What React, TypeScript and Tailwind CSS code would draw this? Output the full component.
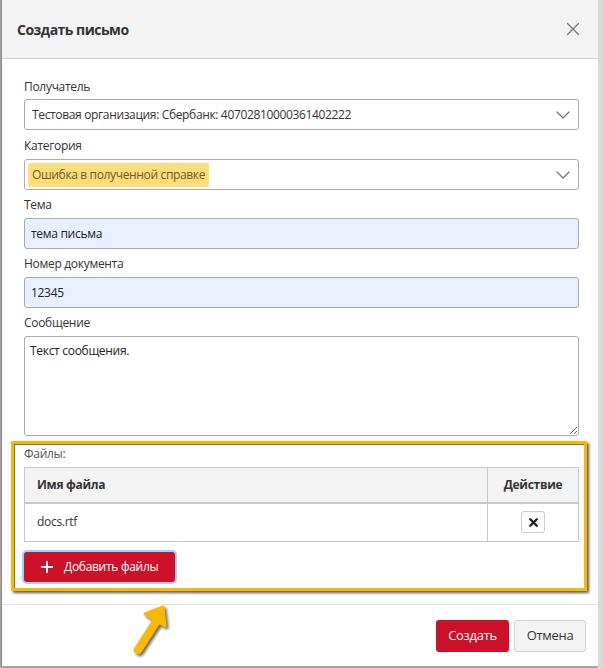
import { X, ChevronDown, Plus } from "lucide-react";

const font = { fontFamily: '"Open Sans", "Noto Sans", sans-serif' };

function Label({ children }: { children: React.ReactNode }) {
  return <div className="h-[19px] text-[12px] leading-[19px] tracking-[-0.3px] text-[#333]">{children}</div>;
}

function SelectBox({ children }: { children: React.ReactNode }) {
  return (
    <div className="flex h-[31px] items-center justify-between rounded-[3px] border border-[#aaa] bg-white pl-[3px] pr-[3px] text-[12px] tracking-[-0.35px] text-[#333]">
      {children}
      <ChevronDown className="h-[24px] w-[24px] text-[#777]" strokeWidth={1.3} />
    </div>
  );
}

function TextInput({ value }: { value: string }) {
  return (
    <div className="flex h-[31px] items-center rounded-[3px] border border-[#aaa] bg-[#e8f0fe] px-[6px] text-[12px] tracking-[-0.3px] text-[#222]">
      {value}
    </div>
  );
}

function Arrow() {
  return (
    <svg
      className="pointer-events-none absolute left-[125px] top-[599px]"
      width="56"
      height="62"
      viewBox="0 0 56 62"
      style={{ filter: "drop-shadow(2px 2px 1.5px rgba(0,0,0,0.6))" }}
    >
      <path d="M13 51 L31 23" stroke="#fbb800" strokeWidth="8.5" strokeLinecap="round" fill="none" />
      <path d="M20 15 L38 8 L40 27 Z" fill="#fbb800" stroke="#fbb800" strokeWidth="3" strokeLinejoin="round" />
    </svg>
  );
}

export default function App() {
  return (
    <div className="relative h-[668px] w-[603px] overflow-hidden bg-[#a3a3a3]" style={font}>
      <div className="absolute right-0 top-0 h-full w-[5px] bg-[#d9d9d9]" />
      <div className="relative ml-[1px] flex h-[666px] w-[597px] flex-col border-l border-[#888] bg-white">
        <div className="flex h-[59px] items-center justify-between border-b border-[#cfcfcf] bg-[#f3f3f3] pl-[15px] pr-[14px]">
          <div className="text-[14px] font-bold tracking-[-0.5px] text-[#333]">Создать письмо</div>
          <X className="h-[22px] w-[22px] text-[#777]" strokeWidth={1.3} />
        </div>

        <div className="flex flex-col pl-[22px] pr-[19px] pt-[18px]">
          <Label>Получатель</Label>
          <div className="mt-[3px]">
            <SelectBox>
              <span className="pl-[4px]">Тестовая организация: Сбербанк: 40702810000361402222</span>
            </SelectBox>
          </div>

          <div className="mt-[6px]">
            <Label>Категория</Label>
          </div>
          <div className="mt-[4px]">
            <SelectBox>
              <span className="rounded-[2px] bg-[#ffdd7a] px-[4px] py-[3px] text-[#6b5a2a]">
                Ошибка в полученной справке
              </span>
            </SelectBox>
          </div>

          <div className="mt-[5px]">
            <Label>Тема</Label>
          </div>
          <div className="mt-[4px]">
            <TextInput value="тема письма" />
          </div>

          <div className="mt-[5px]">
            <Label>Номер документа</Label>
          </div>
          <div className="mt-[4px]">
            <TextInput value="12345" />
          </div>

          <div className="mt-[5px]">
            <Label>Сообщение</Label>
          </div>
          <textarea
            readOnly
            defaultValue="Текст сообщения."
            className="mt-[4px] h-[100px] resize-y rounded-[3px] border border-[#aaa] px-[5px] py-[5px] text-[12px] tracking-[-0.3px] text-[#222] outline-none"
            style={font}
          />
        </div>

        <div className="ml-[9px] mr-[11px] mt-[5px] h-[150px] rounded-[1px] border-[3px] border-[#fbb800] pl-[10px] pr-[5px] shadow-[2px_2px_3px_rgba(0,0,0,0.65),inset_1px_1px_1px_rgba(0,0,0,0.6)]">
          <div className="pt-[1px] text-[12px] leading-[18px] tracking-[-0.3px] text-[#555]">Файлы:</div>
          <table className="mt-[4px] w-full border-collapse text-[12px] tracking-[-0.3px] text-[#333]">
            <thead>
              <tr className="h-[35px] bg-[#f3f3f3]">
                <th className="border border-b-2 border-[#c8c8c8] pl-[12px] text-left font-bold">Имя файла</th>
                <th className="w-[91px] border border-b-2 border-[#c8c8c8] text-center font-bold">Действие</th>
              </tr>
            </thead>
            <tbody>
              <tr className="h-[39px]">
                <td className="border border-[#c8c8c8] pl-[12px]">docs.rtf</td>
                <td className="border border-[#c8c8c8]">
                  <div className="mx-auto flex h-[22px] w-[24px] items-center justify-center rounded-[3px] border border-[#ccc] bg-white">
                    <X className="h-[13px] w-[13px] text-[#222]" strokeWidth={4.5} />
                  </div>
                </td>
              </tr>
            </tbody>
          </table>
          <div className="mt-[10px] inline-flex h-[30px] items-center gap-[8px] rounded-[3px] bg-[#cc1128] pl-[14px] pr-[17px] text-[12px] tracking-[-0.3px] text-white shadow-[0_0_0_2px_#9fd1ff]">
            <Plus className="h-[18px] w-[18px]" strokeWidth={2.5} />
            Добавить файлы
          </div>
        </div>

        <div className="mt-[13px] flex flex-1 items-start justify-end gap-[5px] border-t border-[#e3e3e3] pr-[12px] pt-[15px]">
          <div className="flex h-[32px] w-[73px] items-center justify-center rounded-[3px] bg-[#cc1128] text-[13px] tracking-[-0.3px] text-white">
            Создать
          </div>
          <div className="flex h-[32px] w-[72px] items-center justify-center rounded-[3px] border border-[#d0d0d0] bg-[#f3f3f3] text-[13px] tracking-[-0.3px] text-[#333]">
            Отмена
          </div>
        </div>
      </div>
      <Arrow />
    </div>
  );
}
